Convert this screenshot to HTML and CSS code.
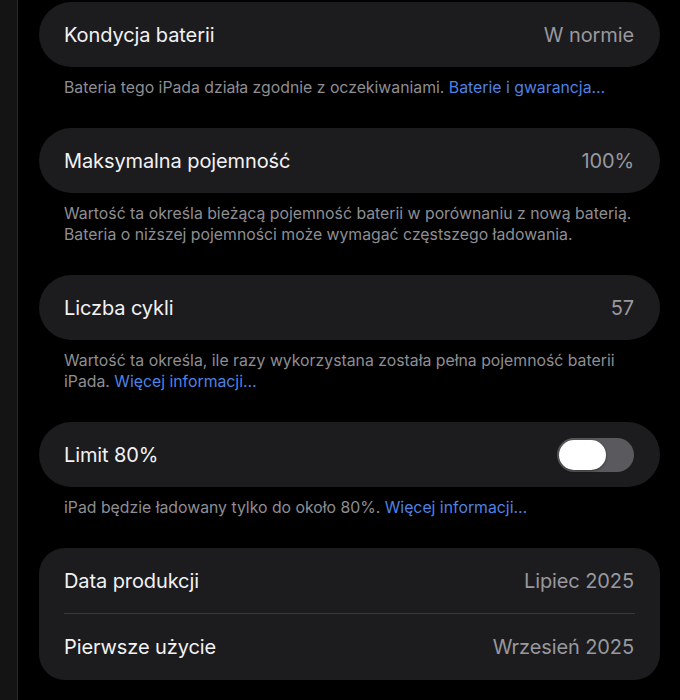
FILE: index.html
```html
<!DOCTYPE html>
<html>
<head>
  <title>Bateria</title>
  <link rel="stylesheet" href="styles.css">
</head>
<body>

  <div class="sidebar"></div>

  <div class="content">

    <div class="card">
      <div class="row">
        <span class="label">Kondycja baterii</span>
        <span class="value">W normie</span>
      </div>
    </div>
    <p class="note">Bateria tego iPada działa zgodnie z oczekiwaniami. <a href="#">Baterie i gwarancja…</a></p>

    <div class="card">
      <div class="row">
        <span class="label">Maksymalna pojemność</span>
        <span class="value">100%</span>
      </div>
    </div>
    <p class="note">Wartość ta określa bieżącą pojemność baterii w porównaniu z nową baterią. Bateria o niższej pojemności może wymagać częstszego ładowania.</p>

    <div class="card">
      <div class="row">
        <span class="label">Liczba cykli</span>
        <span class="value">57</span>
      </div>
    </div>
    <p class="note">Wartość ta określa, ile razy wykorzystana została pełna pojemność baterii iPada. <a href="#">Więcej informacji…</a></p>

    <div class="card">
      <div class="row">
        <span class="label">Limit 80%</span>
        <span class="toggle"><span class="knob"></span></span>
      </div>
    </div>
    <p class="note">iPad będzie ładowany tylko do około 80%. <a href="#">Więcej informacji…</a></p>

    <div class="card group">
      <div class="row">
        <span class="label">Data produkcji</span>
        <span class="value">Lipiec 2025</span>
      </div>
      <div class="row">
        <span class="label">Pierwsze użycie</span>
        <span class="value">Wrzesień 2025</span>
      </div>
    </div>

  </div>

</body>
</html>
```

FILE: styles.css
```css
body {
  margin: 0;
  background: #000;
  font-family: 'Inter', 'Noto Sans', sans-serif;
  display: flex;
  min-height: 700px;
  overflow: hidden;
}

.sidebar {
  width: 17px;
  flex-shrink: 0;
  background: #141414;
  border-right: 1px solid #2b2b2b;
}

.content {
  flex: 1;
  padding: 2px 20px 0 21px;
}

.card {
  background: #1c1c1e;
  border-radius: 33px;
}

.card.group {
  border-radius: 26px;
}

.row {
  height: 65px;
  display: flex;
  align-items: center;
  justify-content: space-between;
  padding: 0 26px 0 25px;
}

.group .row {
  height: 66px;
  position: relative;
}

.group .row + .row::before {
  content: '';
  position: absolute;
  top: -1px;
  left: 25px;
  right: 25px;
  height: 1px;
  background: #3a3a3c;
}

.label {
  color: #f2f2f4;
  font-size: 20px;
  letter-spacing: -0.1px;
}

.value {
  color: #98989e;
  font-size: 20px;
  letter-spacing: -0.1px;
}

.note {
  margin: 10px 0 30px;
  padding: 0 25px;
  color: #8e8e93;
  font-size: 15.8px;
  line-height: 21px;
}

.note a {
  color: #4f82e6;
  text-decoration: none;
}

.toggle {
  width: 77px;
  height: 34px;
  border-radius: 17px;
  background: #5a5a5e;
  display: flex;
  align-items: center;
  padding: 0 2px;
  box-sizing: border-box;
}

.knob {
  width: 47px;
  height: 30px;
  border-radius: 15px;
  background: #fff;
  box-shadow: 0 1px 3px rgba(0,0,0,0.4);
}
```
